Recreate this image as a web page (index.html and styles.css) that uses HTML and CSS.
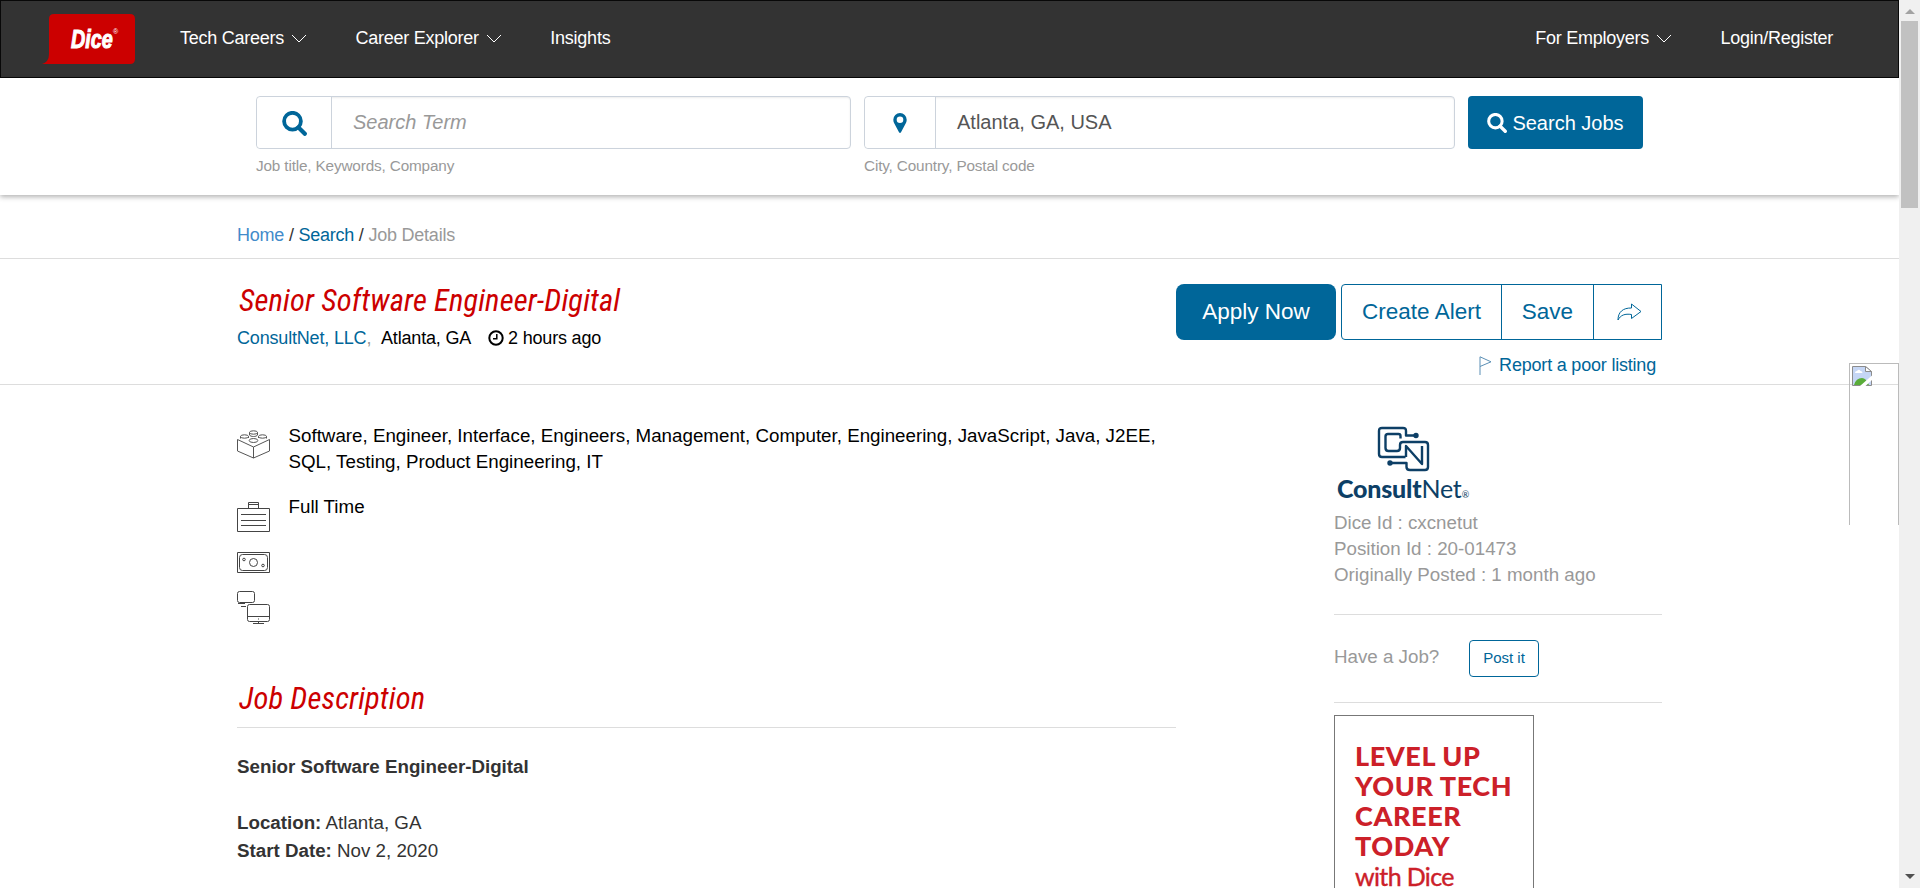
FILE: index.html
```
<!DOCTYPE html>
<html lang="en">
<head>
<meta charset="utf-8">
<title>Senior Software Engineer-Digital</title>
<link rel="stylesheet" href="styles.css">
</head>
<body>
<svg class="defs" width="0" height="0">
  <symbol id="chev" viewBox="0 0 16 10"><path d="M1 1l7 7 7-7" fill="none" stroke="#fff" stroke-width="1"/></symbol>
  <symbol id="mag" viewBox="0 0 25 25"><circle cx="10.5" cy="10.2" r="8.4" fill="none" stroke="currentColor" stroke-width="3.8"/><path d="M16.5 16.5l6.3 6.3" stroke="currentColor" stroke-width="4.2" stroke-linecap="round"/></symbol>
</svg>
<div class="page">
  <header class="nav">
    <a class="brand">
      <svg width="93" height="50" viewBox="0 0 93 50"><path d="M12 0h76q5 0 5 5v40q0 5-5 5H0q7-2 7-10V5q0-5 5-5z" fill="#c00"/></svg>
      <span class="brand-name">Dice</span><span class="brand-reg">®</span>
    </a>
    <nav class="links">
      <a>Tech Careers<svg width="16" height="10"><use href="#chev"/></svg></a>
      <a>Career Explorer<svg width="16" height="10"><use href="#chev"/></svg></a>
      <a>Insights</a>
    </nav>
    <nav class="links account">
      <a>For Employers<svg width="16" height="10"><use href="#chev"/></svg></a>
      <a>Login/Register</a>
    </nav>
  </header>

  <section class="search">
    <div class="field term">
      <div class="control"><span class="addon"><svg width="25" height="25"><use href="#mag"/></svg></span><span class="value placeholder">Search Term</span></div>
      <p>Job title, Keywords, Company</p>
    </div>
    <div class="field place">
      <div class="control"><span class="addon"><svg width="14" height="20" viewBox="0 0 14 20"><path fill-rule="evenodd" fill="#069" d="M7 0a6.7 6.7 0 0 1 6.7 6.7c0 1.5-.4 2.6-.9 3.600L8 19.300q-1 1.200-2 0L1.200 10.300C.7 9.300.3 8.200.3 6.700A6.700 6.700 0 0 1 7 0zm0 3.400a3.300 3.300 0 1 0 0 6.600 3.300 3.300 0 0 0 0-6.600z"/></svg></span><span class="value">Atlanta, GA, USA</span></div>
      <p>City, Country, Postal code</p>
    </div>
    <a class="search-btn"><svg width="20" height="20"><use href="#mag"/></svg>Search Jobs</a>
  </section>

  <div class="crumbs"><a class="home">Home</a> / <a>Search</a> / <span>Job Details</span></div>

  <section class="job-head">
    <div>
      <h1 class="title">Senior Software Engineer-Digital</h1>
      <div class="meta"><span class="company"><a>ConsultNet, LLC</a>,</span><span class="loc">Atlanta, GA</span>
        <svg width="16" height="16" viewBox="0 0 16 16" fill="none" stroke="#000" stroke-width="2"><circle cx="8" cy="8" r="6.7"/><path d="M8.800 4v4.800H5" stroke-width="1.500"/></svg><span class="ago">2 hours ago</span></div>
    </div>
    <div class="actions">
      <div class="buttons">
        <a class="apply">Apply Now</a>
        <div class="group"><a class="alert">Create Alert</a><a class="save">Save</a><a class="share"><svg width="25" height="18" viewBox="0 0 25 18" fill="none" stroke="#069" stroke-width="1"><path d="M1 17C1 9 6 4.800 14.500 5V1l9.500 7.500-9.500 7v-4C8 10.500 3.500 12 1 17z"/></svg></a></div>
      </div>
      <div class="report"><svg width="13" height="19" viewBox="0 0 13 19" fill="none" stroke="#5b8fb5"><path d="M1 19V.8l11 5L1 10.500"/></svg><a>Report a poor listing</a></div>
    </div>
  </section>

  <main class="content">
    <section class="details">
      <div class="row skills"><svg width="33" height="29" viewBox="0 0 33 29" fill="none" stroke="#555" stroke-width="1">
        <path d="M.5 9.500v11.500l16 7 16-7V9.500l-16 7.500zM16.500 17v11"/>
        <path d="M12.500 2.500v2.500c1 2 7 2 8 0V2.500M3.500 6.500v2M11.500 6.500v1.500M21.500 6.500v1.500M29.500 6.500v2"/><ellipse cx="16.500" cy="2.500" rx="4" ry="1.700"/><ellipse cx="7.500" cy="6.500" rx="4" ry="1.700"/><ellipse cx="25.500" cy="6.500" rx="4" ry="1.700"/><ellipse cx="16.500" cy="10.500" rx="4.300" ry="2"/></svg>
        <p>Software, Engineer, Interface, Engineers, Management, Computer, Engineering, JavaScript, Java, J2EE,<br>SQL, Testing, Product Engineering, IT</p></div>
      <div class="row type"><svg width="33" height="31" viewBox="0 0 33 31" fill="none" stroke="#444"><path d="M.5 6.500h32v23H.5zM11.500 6.500v-6h10v6M11.500 2.500h10M4 12.500h25M4 18.500h25M4 23.500h25"/></svg><p>Full Time</p></div>
      <div class="row pay"><svg width="33" height="21" viewBox="0 0 33 21" fill="none" stroke="#444"><path d="M.5.5h32v20H.5z"/><rect x="2.500" y="2.500" width="28" height="16" rx="3"/><circle cx="16.500" cy="10.500" r="4"/><circle cx="7" cy="7.500" r="1.300"/><circle cx="26" cy="13.500" r="1.300"/></svg></div>
      <div class="row"><svg width="33" height="34" viewBox="0 0 33 34" fill="none" stroke="#444"><rect x=".5" y=".5" width="17" height="11" rx="2"/><path d="M1 12.500h7M4 15.500h5M10.500 25.500h22M16 32.500h11M21.500 30v2"/><rect x="10.500" y="13.500" width="22" height="17" rx="2"/><path d="M21 28h1"/></svg></div>
      <h2 class="title">Job Description</h2>
      <div class="desc"><p class="role"><b>Senior Software Engineer-Digital</b></p><p><b>Location:</b> Atlanta, GA</p><p><b>Start Date:</b> Nov 2, 2020</p></div>
    </section>

    <aside class="side">
      <div class="logo">
        <svg width="53" height="46" viewBox="0 0 53 46" fill="none" stroke="#0d3f66" stroke-width="2.400" stroke-linejoin="round">
          <path d="M38 9.500h-9V5q0-3-3-3H5Q2 2 2 5v23q0 3 3 3h23.500M29 31V20l16 18V20"/>
          <path d="M23.500 12.500V10q0-2-2-2H11Q8.500 8 8.500 10.500V22q0 3 3 3H20q3 0 3-3v-3q0-3 3-3h22q3 0 3 3v22q0 3-3 3H33q-3.500 0-3.500-3v-4H13"/>
          <circle cx="39" cy="9.500" r="1.500" fill="#0d3f66"/><circle cx="13" cy="37" r="1.500" fill="#0d3f66"/></svg>
        <div class="wordmark"><b>Consult</b>Net<small>®</small></div>
      </div>
      <div class="ids"><p>Dice Id : cxcnetut</p><p>Position Id : 20-01473</p><p>Originally Posted : 1 month ago</p></div>
      <div class="post"><span>Have a Job?</span><a>Post it</a></div>
      <div class="ad"><b>LEVEL UP<br>YOUR TECH<br>CAREER<br>TODAY</b><br><span>with Dice</span></div>
    </aside>
  </main>
  <div class="broken"><svg width="20" height="20" viewBox="0 0 20 20"><path d="M.5.500h13l6 5v14H.5z" fill="#c5d6f5" stroke="#8c8c8c"/><path d="M13.500.5v5h6z" fill="#fff" stroke="#8c8c8c"/><path d="M3 7q0-2 2-2 2-2.500 3.500 0 2 0 2 2z" fill="#fff"/><path d="M2 19q2-7 8-7 4 0 7 7z" fill="#5aad3a"/><path d="M8 20L20 9.500V14l-6.500 6z" fill="#fff"/></svg></div>
</div>
<div class="scrollbar"><i class="up"></i><div class="thumb"></div><i class="down"></i></div>
</body>
</html>
```
FILE: styles.css
```
* { box-sizing: border-box; }
body { margin: 0; height: 888px; overflow: hidden; display: flex; background: #fff; font: 18px/26px "Liberation Sans", Arial, sans-serif; color: #333; }
p, h1, h2 { margin: 0; }
a { color: #069; }
svg { display: block; flex: none; }
.defs { position: absolute; }
.page { position: relative; width: 1899px; flex: none; height: 888px; overflow: hidden; }

.nav { height: 78px; background: #333; border: 1px solid #080808; display: flex; align-items: flex-start; padding: 13px 65px 0 41px; }
.brand { position: relative; width: 93px; height: 50px; }
.brand-name { position: absolute; left: 29px; top: 12px; color: #fff; font: italic bold 25px/27px "Liberation Sans", Arial, sans-serif; -webkit-text-stroke: 1px #fff; transform: scaleX(.79); transform-origin: 0 0; }
.brand-reg { position: absolute; left: 71px; top: 14px; color: #fff; font-size: 7px; line-height: 8px; }
.links { display: flex; gap: 48.500px; margin: 11px 0 0 45px; letter-spacing: -.25px; }
.links a { color: #fff; display: flex; align-items: center; line-height: 27px; white-space: nowrap; }
.links svg { margin: 1px 0 0 7px; }
.account { margin-left: auto; }

.search { height: 117px; padding: 18px 0 0 256px; display: flex; align-items: flex-start; gap: 13px; background: #fff; box-shadow: 0 2px 5px rgba(0,0,0,.3); }
.control { display: flex; height: 53px; border: 1px solid #ccd3dc; border-radius: 4px; box-shadow: inset 0 1px 2px rgba(0,0,0,.08); }
.term { width: 595px; }
.place { width: 591px; }
.addon { display: flex; align-items: center; justify-content: center; border-right: 1px solid #ccd3dc; color: #069; background: #fff; border-radius: 4px 0 0 4px; }
.term .addon { width: 75px; padding-top: 1px; }
.place .addon { width: 71px; }
.value { font-size: 20px; line-height: 50px; padding-left: 21px; color: #555; }
.placeholder { color: #999; font-style: italic; }
.field p { font-size: 15.300px; line-height: 20px; margin-top: 7px; color: #999; letter-spacing: -.15px; }
.search-btn { width: 175px; height: 53px; border-radius: 4px; background: #069; color: #fff; font-size: 20px; display: flex; align-items: center; justify-content: center; gap: 5px; }

.crumbs { height: 64px; border-bottom: 1px solid #ddd; padding: 27px 0 0 237px; letter-spacing: -.23px; }
.crumbs .home { color: #428bca; }
.crumbs span { color: #999; }

.job-head { height: 126px; border-bottom: 1px solid #ddd; display: flex; justify-content: space-between; padding: 25px 237px 0 237px; }
.title { font: italic 400 30.600px/34px "Roboto Condensed", Roboto, sans-serif; font-stretch: condensed; color: #c00; letter-spacing: .13px; white-space: nowrap; padding-left: 2px; }
.meta { display: flex; align-items: center; margin-top: 7px; height: 26px; color: #000; white-space: nowrap; letter-spacing: -.18px; }
.company { color: #999; width: 144px; }
.loc { width: 107px; }
.ago { margin-left: 4px; }
.buttons { display: flex; gap: 5px; height: 56px; font-size: 22.500px; line-height: 54px; }
.apply { width: 160px; background: #069; color: #fff; border-radius: 8px; text-align: center; line-height: 56px; }
.group { display: flex; border: 1px solid #069; border-radius: 4px 0 0 4px; width: 321px; text-align: center; }
.alert { width: 160px; border-right: 1px solid #069; }
.save { width: 92px; border-right: 1px solid #069; }
.share { flex: 1; display: flex; align-items: center; justify-content: center; padding-left: 3px; }
.report { display: flex; gap: 7px; justify-content: flex-end; align-items: center; margin-top: 12px; padding-right: 6px; letter-spacing: -.2px; }

.content { display: flex; justify-content: space-between; padding: 0 237px; font-size: 18.750px; }
.details { width: 939px; padding-top: 37px; color: #000; }
.row { display: flex; gap: 18.500px; }
.row svg { margin-top: 8px; }
.row p { white-space: nowrap; padding-top: 1px; }
.skills { height: 72px; }
.type { height: 50px; }
.type p { margin-top: -1px; }
.pay { height: 39px; }
.details h2 { margin-top: 57px; height: 46px; border-bottom: 1px solid #ddd; }
.desc { padding-top: 25px; line-height: 28px; color: #333; }
.role { margin-bottom: 28px; }

.side { width: 328px; color: #999; padding-top: 41px; }
.logo { height: 84px; color: #0d3f66; }
.logo svg { margin-left: 43px; }
.wordmark { font: 25px/32px Lato, sans-serif; letter-spacing: -.2px; margin-left: 3px; white-space: nowrap; }
.wordmark b { font-weight: 900; }
.wordmark small { font-size: 9px; }
.ids { height: 105px; border-bottom: 1px solid #ddd; white-space: nowrap; }
.post { display: flex; height: 88px; border-bottom: 1px solid #ddd; padding-top: 25px; }
.post span { width: 135px; line-height: 33px; }
.post a { width: 70px; height: 37px; border: 1px solid #069; border-radius: 4px; font-size: 15px; line-height: 34px; text-align: center; }
.ad { width: 200px; height: 260px; margin-top: 12px; border: 1px solid #777; padding: 25px 0 0 20px; color: #cc2029; font: 27px/30px Lato, sans-serif; white-space: nowrap; }
.ad b { font-weight: 900; letter-spacing: .6px; }
.ad span { font-size: 25px; letter-spacing: -.65px; -webkit-text-stroke: .4px #cc2029; }

.broken { position: absolute; left: 1849px; top: 363px; width: 50px; height: 162px; border: 1px solid #bbb; border-bottom: 0; padding: 2px; }
.scrollbar { width: 21px; height: 888px; background: #f0f0f0; display: flex; flex-direction: column; align-items: center; padding: 9px 0; }
.scrollbar i { border: 5px solid transparent; }
.up { border-top: 0 !important; border-bottom-color: #a3a3a3 !important; }
.down { border-bottom: 0 !important; border-top-color: #505050 !important; margin-top: auto; }
.thumb { width: 17px; height: 187px; margin-top: 7px; background: #c1c1c1; }
```
